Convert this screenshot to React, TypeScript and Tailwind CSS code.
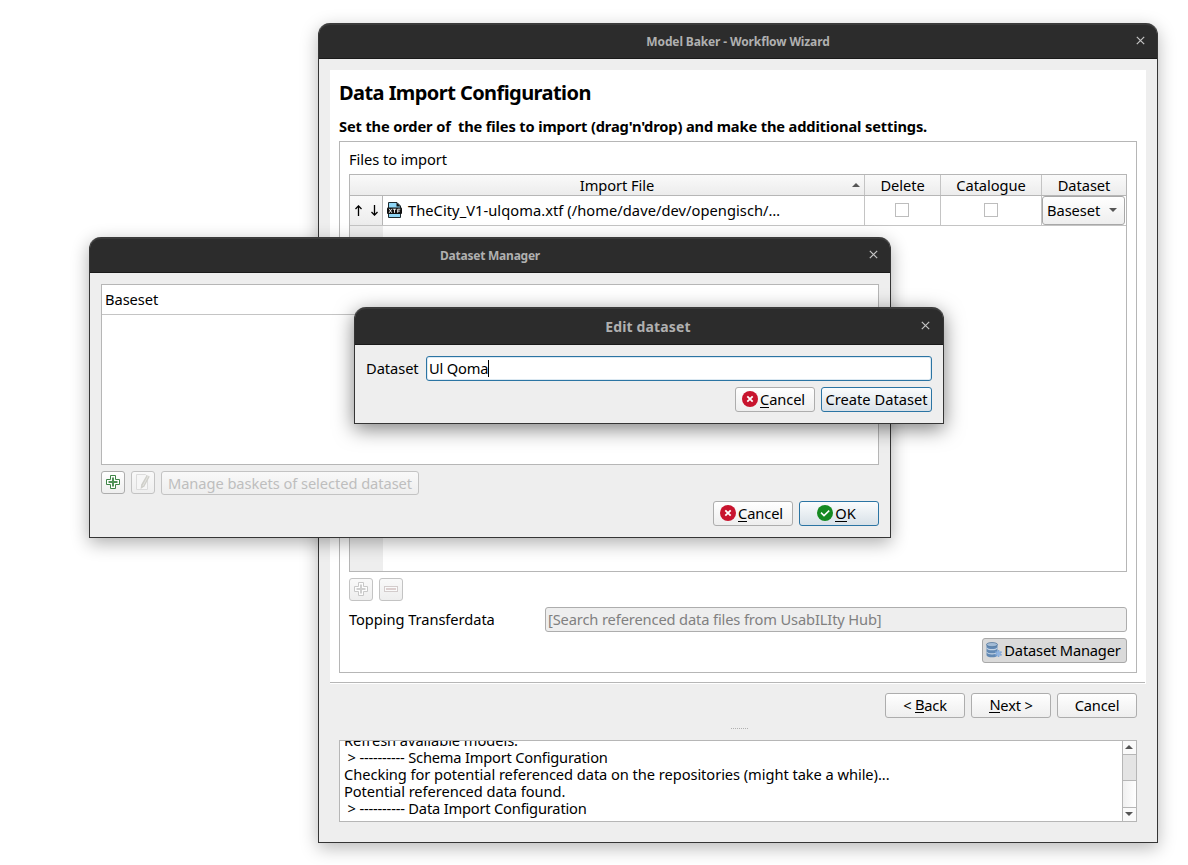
import type { ReactNode } from "react";

const cx = (...parts: (string | undefined)[]) => parts.filter(Boolean).join(" ");

function CloseIcon() {
  return (
    <svg width="9" height="9" viewBox="0 0 9 9" className="block">
      <path d="M0.8 0.8 8.2 8.2M8.2 0.8 0.8 8.2" stroke="#c4c4c4" strokeWidth="1.2" fill="none" />
    </svg>
  );
}

function TitleBar({
  className,
  title,
  textClass,
  closeClass,
}: {
  className: string;
  title: string;
  textClass: string;
  closeClass: string;
}) {
  return (
    <div
      className={cx(
        "relative flex shrink-0 items-center justify-center rounded-t-[11px] border-t-2 border-b border-t-[#3b3b3b] border-b-[#1a1a1a] bg-[#2c2c2c] font-bold whitespace-nowrap text-[#b0b0b0]",
        className,
      )}
    >
      <span className={textClass}>{title}</span>
      <span className={cx("absolute", closeClass)}>
        <CloseIcon />
      </span>
    </div>
  );
}

function Button({ className, children }: { className?: string; children: ReactNode }) {
  return (
    <div
      className={cx("flex shrink-0 items-center justify-center rounded-[3px] border whitespace-nowrap", className)}
    >
      {children}
    </div>
  );
}

const plain = "border-[#adadad] bg-linear-to-b from-white to-[#eeeeee]";
const primary = "border-[#2b74a3] bg-linear-to-b from-[#fafcfd] to-[#d8e1e8]";
const disabled = "border-[#c3c3c3] bg-linear-to-b from-[#f9f9f9] to-[#eeeeee]";

function Key({ children }: { children: string }) {
  return <span className="inline-block border-b border-black leading-[15px]">{children}</span>;
}

function CancelIcon() {
  return (
    <svg width="16" height="16" viewBox="0 0 16 16" className="shrink-0">
      <circle cx="8" cy="8" r="8" fill="#c8142e" />
      <path d="M5.3 5.3 10.7 10.7M10.7 5.3 5.3 10.7" stroke="#fff" strokeWidth="1.8" />
    </svg>
  );
}

function OkIcon() {
  return (
    <svg width="16" height="16" viewBox="0 0 16 16" className="shrink-0">
      <circle cx="8" cy="8" r="8" fill="#168a22" />
      <path d="M4 7.6 7 10.6 12.2 5.6" stroke="#fff" strokeWidth="1.5" fill="none" />
    </svg>
  );
}

function PlusIcon({ stroke, fill }: { stroke: string; fill: string }) {
  return (
    <svg width="14" height="14" viewBox="0 0 14 14" className="relative -top-px">
      <path d="M4.5 0.5h5v4h4v5h-4v4h-5v-4h-4v-5h4z" fill="#fff" fillOpacity="0.8" stroke={stroke} />
      <path d="M7 2.5v9M2.5 7h9" stroke={fill} strokeWidth="2" />
    </svg>
  );
}

function MinusIcon() {
  return (
    <svg width="14" height="6" viewBox="0 0 14 6" className="relative -top-px">
      <rect x="0.5" y="0.5" width="13" height="5" fill="#fafafa" stroke="#d3cccc" />
      <path d="M2 3h10" stroke="#dccfcf" strokeWidth="2" />
    </svg>
  );
}

function EditIcon() {
  return (
    <svg width="14" height="16" viewBox="0 0 14 16" className="relative -top-px">
      <path d="M0.5 0.5h9l2 2v13h-11z" fill="#f6f6f6" stroke="#dcdcdc" />
      <path d="M10.6 1.2 13.8 2.6 8.4 12.4 4.6 15 5.2 10.6z" fill="#cfcfca" />
      <path d="M12.2 1.8 6.8 12" stroke="#e4e4e0" />
    </svg>
  );
}

function XtfIcon() {
  return (
    <svg width="15" height="16" viewBox="0 0 15 16" className="block">
      <path d="M1.5 0.5h8.5l3.5 3.5v11.5h-12z" fill="#8fd6f6" stroke="#1d2a30" />
      <path d="M9.5 0.5 13.5 4.5H9.5z" fill="#111" />
      <rect x="0" y="5.5" width="15" height="6.5" rx="1" fill="#111" />
      <path
        d="M2.2 6.8 4.8 10.8M4.8 6.8 2.2 10.8M5.8 7.2h3.4M7.5 7v3.8M10.7 10.8V7.2h2.6M10.7 9.1h2.1"
        stroke="#fff"
        strokeWidth="0.9"
        fill="none"
      />
    </svg>
  );
}

function DatabaseIcon() {
  return (
    <svg width="16" height="16" viewBox="0 0 16 16" className="shrink-0">
      <path d="M0.5 2.5v10.5c0 1.4 2.5 2.3 5.5 2.3s5.5-.9 5.5-2.3V2.5z" fill="#6289b4" />
      <path d="M0.5 5.2c1 1.4 3 1.8 5.5 1.8s4.5-.4 5.5-1.8v1.2c-1 1.4-3 1.8-5.5 1.8s-4.5-.4-5.5-1.8z" fill="#c3d3e4" />
      <path d="M0.5 9.4c1 1.4 3 1.8 5.5 1.8s4.5-.4 5.5-1.8v1.2c-1 1.4-3 1.8-5.5 1.8s-4.5-.4-5.5-1.8z" fill="#c3d3e4" />
      <ellipse cx="6" cy="2.6" rx="5.5" ry="2.1" fill="#a3bcd6" stroke="#4f7298" strokeWidth="0.7" />
      <path d="M12.5 8v7M9.4 9.8l6.2 3.5M15.6 9.8l-6.2 3.5" stroke="#7fa6d8" strokeWidth="1.7" />
      <circle cx="12.5" cy="11.5" r="2.2" fill="#8fb3e0" />
    </svg>
  );
}

function Arrow({ up }: { up?: boolean }) {
  return (
    <svg width="8" height="4" viewBox="0 0 8 4" className="block">
      <path d={up ? "M4 0 8 4H0z" : "M0 0h8L4 4z"} fill="#555" />
    </svg>
  );
}

function Checkbox() {
  return <div className="size-[14px] border border-[#bdbdbd] bg-white" />;
}

const headerCell = "flex items-center justify-center border-[#c4c4c4]";

function WizardWindow() {
  return (
    <div className="absolute top-[23px] left-[318px] flex h-[820px] w-[840px] flex-col rounded-t-[12px] border-x border-b border-[#353535] bg-[#eeeeee] shadow-[0_5px_18px_rgba(0,0,0,0.28)]">
      <TitleBar
        className="h-[36px]"
        title="Model Baker - Workflow Wizard"
        textClass="text-[12px] tracking-[-0.13px]"
        closeClass="top-[11px] right-[12px]"
      />
      <div className="mx-[11px] mt-[11px] flex h-[614px] shrink-0 flex-col bg-white px-[9px]">
        <h1 className="mt-[10px] text-[20px] leading-[26px] font-bold tracking-[-0.57px]">Data Import Configuration</h1>
        <p className="mt-[10px] h-[20px] text-[14.67px] leading-[20px] font-bold tracking-[-0.15px] whitespace-pre">
          {"Set the order of  the files to import (drag'n'drop) and make the additional settings."}
        </p>
        <div className="mt-[5px] flex h-[532px] w-[798px] shrink-0 flex-col border border-[#b6b6b6] px-[9px]">
          <div className="mt-[7px] h-[20px] leading-[20px]">Files to import</div>
          <div className="mt-[5px] flex h-[398px] flex-col border border-[#b6b6b6]">
            <div className="flex h-[21px] shrink-0 border-b border-[#b6b6b6] bg-linear-to-b from-[#fafafa] to-[#ececec]">
              <div className={cx(headerCell, "relative w-[515px] border-r pl-[20px]")}>
                Import File
                <span className="absolute top-[8px] right-[4px]">
                  <Arrow up />
                </span>
              </div>
              <div className={cx(headerCell, "w-[76px] border-r")}>Delete</div>
              <div className={cx(headerCell, "w-[101px] border-r")}>Catalogue</div>
              <div className={cx(headerCell, "w-[84px]")}>Dataset</div>
            </div>
            <div className="flex h-[30px] shrink-0 border-b border-[#c4c4c4]">
              <div className="flex w-[33px] items-center justify-between border-r border-[#b6b6b6] bg-linear-to-b from-[#fafafa] to-[#ececec] pr-[3px] pl-[4px]">
                <svg width="9" height="11" viewBox="0 0 9 11">
                  <path d="M4.5 11V1M1.5 4 4.5 .9 7.5 4" stroke="#000" strokeWidth="1.3" fill="none" />
                </svg>
                <svg width="9" height="11" viewBox="0 0 9 11">
                  <path d="M4.5 0v10M1.5 7l3 3.1L7.5 7" stroke="#000" strokeWidth="1.3" fill="none" />
                </svg>
              </div>
              <div className="flex w-[482px] items-center gap-[6px] border-r border-[#c4c4c4] pb-[2px] pl-[4px]">
                <XtfIcon />
                <span className="tracking-[0.05px]">TheCity_V1-ulqoma.xtf (/home/dave/dev/opengisch/…</span>
              </div>
              <div className="flex w-[76px] items-center justify-center border-r border-[#c4c4c4] pr-px pb-px">
                <Checkbox />
              </div>
              <div className="flex w-[101px] items-center justify-center border-r border-[#c4c4c4] pb-px">
                <Checkbox />
              </div>
              <div className="flex w-[83px] items-center justify-between rounded-[3px] border border-[#a8a8a8] bg-linear-to-b from-white to-[#eeeeee] pr-[7px] pb-[2px] pl-[4px]">
                <span>Baseset</span>
                <Arrow />
              </div>
            </div>
            <div className="w-[33px] flex-1 bg-[#eeeeee]" />
          </div>
          <div className="mt-[6px] flex gap-[6px]">
            <Button className={cx("h-[23px] w-[24px]", disabled)}>
              <PlusIcon stroke="#c8c8c8" fill="#cfcfcf" />
            </Button>
            <Button className={cx("h-[23px] w-[24px]", disabled)}>
              <MinusIcon />
            </Button>
          </div>
          <div className="mt-[6px] flex items-center justify-between">
            <span className="pb-[2px]">Topping Transferdata</span>
            <div className="flex h-[25px] w-[582px] items-center rounded-[3px] border border-[#adadad] bg-[#eeeeee] pb-[2px] pl-[2px] tracking-[-0.13px] text-[#808080]">
              [Search referenced data files from UsabILIty Hub]
            </div>
          </div>
          <div className="mt-[6px] flex justify-end">
            <Button className="h-[25px] w-[145px] gap-[2px] border-[#a8a8a8] bg-[#dadada] pr-[2px] pb-[2px]">
              <DatabaseIcon />
              <span className="tracking-[-0.17px]">Dataset Manager</span>
            </Button>
          </div>
        </div>
        <div className="-ml-[9px] mt-[9px] h-px w-[815px] bg-[#b6b6b6]" />
      </div>
      <div className="mt-[9px] mr-[20px] flex justify-end gap-[6px] tracking-[-0.2px]">
        <Button className={cx("h-[25px] w-[80px] pb-[2px]", plain)}>
          &lt;&nbsp;<Key>B</Key>ack
        </Button>
        <Button className={cx("h-[25px] w-[80px] pb-[2px]", plain)}>
          <Key>N</Key>ext&nbsp;&gt;
        </Button>
        <Button className={cx("h-[25px] w-[80px] pb-[2px]", plain)}>Cancel</Button>
      </div>
      <div className="mt-[10px] ml-[412px] h-px w-[17px] border-t border-dotted border-[#b0b0b0]" />
      <div className="mt-[11px] ml-[20px] flex h-[82px] w-[798px] shrink-0 border border-[#b6b6b6] bg-white">
        <div className="flex flex-1 flex-col justify-end overflow-hidden pb-[4px] pl-[4px] leading-[17px] whitespace-pre">
          <div>Refresh available models.</div>
          <div className="tracking-[-0.2px]">{" > ---------- Schema Import Configuration"}</div>
          <div>Checking for potential referenced data on the repositories (might take a while)...</div>
          <div>Potential referenced data found.</div>
          <div className="tracking-[-0.19px]">{" > ---------- Data Import Configuration"}</div>
        </div>
        <div className="flex w-[14px] flex-col border-l border-[#b6b6b6] bg-linear-to-r from-[#f0f0f0] to-white">
          <div className="flex h-[14px] items-center justify-center border-b border-[#b6b6b6] bg-[#fafafa] pr-px pb-px">
            <Arrow up />
          </div>
          <div className="h-[26px] border-b border-[#b6b6b6] bg-[#e4e4e4]" />
          <div className="flex-1" />
          <div className="flex h-[14px] items-center justify-center border-t border-[#b6b6b6] bg-[#fafafa] pr-px pb-[2px]">
            <Arrow />
          </div>
        </div>
      </div>
    </div>
  );
}

function ManagerWindow() {
  return (
    <div className="absolute top-[237px] left-[89px] flex h-[301px] w-[802px] flex-col rounded-t-[12px] border-x border-b border-[#353535] bg-[#eeeeee] shadow-[0_5px_18px_rgba(0,0,0,0.32)]">
      <TitleBar
        className="h-[36px]"
        title="Dataset Manager"
        textClass="text-[12px] tracking-[-0.23px]"
        closeClass="top-[11px] right-[12px]"
      />
      <div className="mx-[11px] mt-[11px] h-[181px] border border-[#b6b6b6] bg-white">
        <div className="h-[30px] border-b border-[#c4c4c4] pl-[3px] leading-[29px]">Baseset</div>
      </div>
      <div className="mx-[11px] mt-[6px] flex items-start gap-[6px]">
        <Button className={cx("h-[23px] w-[24px]", plain)}>
          <PlusIcon stroke="#3f8447" fill="#4f9156" />
        </Button>
        <Button className={cx("h-[23px] w-[24px]", disabled)}>
          <EditIcon />
        </Button>
        <Button className={cx("h-[24px] w-[258px] text-[#bebebe]", disabled)}>Manage baskets of selected dataset</Button>
      </div>
      <div className="mx-[11px] mt-[6px] flex justify-end gap-[6px]">
        <Button className={cx("h-[25px] w-[80px] gap-[2px] pr-[3px] pb-[2px]", plain)}>
          <CancelIcon />
          <span className="tracking-[-0.1px]">
            <Key>C</Key>ancel
          </span>
        </Button>
        <Button className={cx("h-[25px] w-[80px] gap-[2px] pr-[5px] pb-[2px]", primary)}>
          <OkIcon />
          <span>
            <Key>O</Key>K
          </span>
        </Button>
      </div>
    </div>
  );
}

function EditWindow() {
  return (
    <div className="absolute top-[307px] left-[354px] flex h-[117px] w-[590px] flex-col rounded-t-[12px] border-x border-b border-[#353535] bg-[#eeeeee] shadow-[0_5px_20px_rgba(0,0,0,0.5)]">
      <TitleBar
        className="h-[38px]"
        title="Edit dataset"
        textClass="text-[14px] tracking-[0.15px] pr-[2px]"
        closeClass="top-[12px] right-[13px]"
      />
      <div className="mx-[11px] mt-[11px] flex items-center justify-between">
        <span className="pb-[2px]">Dataset</span>
        <div className="flex h-[25px] w-[506px] items-center rounded-[3px] border border-[#2b74a3] bg-white pl-[2px] shadow-[inset_0_0_0_1px_#dce9f2]">
          <span className="pb-[2px] tracking-[-0.17px]">Ul Qoma</span>
          <span className="h-[17px] w-px bg-black" />
        </div>
      </div>
      <div className="mx-[11px] mt-[6px] flex justify-end gap-[6px]">
        <Button className={cx("h-[25px] w-[80px] gap-[2px] pr-[3px] pb-[2px]", plain)}>
          <CancelIcon />
          <span className="tracking-[-0.1px]">
            <Key>C</Key>ancel
          </span>
        </Button>
        <Button className={cx("h-[25px] w-[111px] pb-[2px] tracking-[0.02px]", primary)}>Create Dataset</Button>
      </div>
    </div>
  );
}

export default function App() {
  return (
    <main className="relative h-[865px] w-[1188px] overflow-hidden bg-white font-['Noto_Sans','Open_Sans',sans-serif] text-[14.67px] leading-[20px] tracking-[-0.06px] text-black">
      <WizardWindow />
      <ManagerWindow />
      <EditWindow />
    </main>
  );
}
